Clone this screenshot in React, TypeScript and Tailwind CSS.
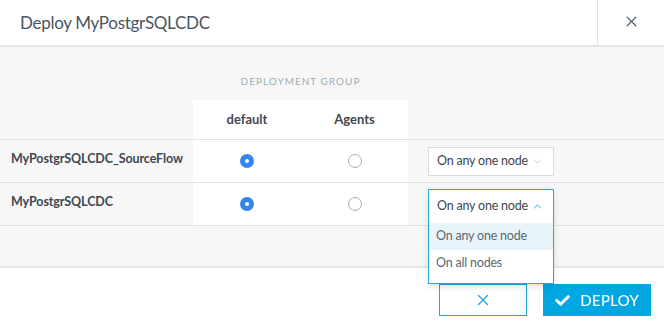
import { X, ChevronDown, ChevronUp } from "lucide-react";
import { FaCheck } from "react-icons/fa";

const flows = [
  { name: "MyPostgrSQLCDC_SourceFlow", open: false },
  { name: "MyPostgrSQLCDC", open: true },
];

function Radio({ checked }: { checked: boolean }) {
  if (checked) {
    return (
      <span className="flex h-[14px] w-[14px] items-center justify-center rounded-full bg-[#3385f0]">
        <span className="h-[4px] w-[4px] rounded-full bg-white" />
      </span>
    );
  }
  return <span className="h-[14px] w-[14px] rounded-full border border-[#a9aeb2] bg-white" />;
}

function Dropdown({ open }: { open: boolean }) {
  if (!open) {
    return (
      <div className="flex h-[29px] w-[126px] items-center whitespace-nowrap border border-[#d5dde2] bg-white pl-[8px] pr-[9px] text-[12.5px] tracking-[-0.2px] text-[#3b4650]">
        <span>On any one node</span>
        <ChevronDown size={13} strokeWidth={1.3} className="ml-auto text-[#b8c0c6]" />
      </div>
    );
  }
  return (
    <div className="relative h-[31px] w-[126px]">
      <div className="absolute left-0 top-0 z-10 w-[126px] whitespace-nowrap border border-[#2aa6de] bg-white text-[12.5px] tracking-[-0.2px] shadow-[0_3px_6px_rgba(0,0,0,0.12)]">
        <div className="flex h-[33px] items-center pl-[8px] pr-[9px] text-[#3b4650]">
          <span>On any one node</span>
          <ChevronUp size={13} strokeWidth={1.8} className="ml-auto text-[#2aa6de]" />
        </div>
        <div className="flex h-[27px] items-center bg-[#e8f4fa] pl-[7px] text-[#5d6872]">On any one node</div>
        <div className="flex h-[26px] items-center pl-[7px] text-[#5d6872]">On all nodes</div>
        <div className="h-[7px]" />
      </div>
    </div>
  );
}

export default function App() {
  return (
    <div className="flex h-[330px] w-[664px] flex-col overflow-hidden bg-white font-['Lato',sans-serif]">
      {/* Header */}
      <div className="flex h-[47px] shrink-0 border-b-2 border-[#e4e8eb]">
        <div className="flex flex-1 items-center pl-5 text-[17px] tracking-[-0.3px] text-[#4a5660]">Deploy MyPostgrSQLCDC</div>
        <div className="flex w-[67px] items-center justify-center border-l border-[#dde2e5]">
          <X size={17} strokeWidth={1.8} className="-mt-[2px] text-[#56636d]" />
        </div>
      </div>

      {/* Body */}
      <div className="h-[221px] shrink-0 border-b-2 border-[#e4e8eb] bg-[#f7f7f7]">
        <div className="flex h-[53px]">
          <div className="w-[193px]" />
          <div className="flex w-[215px] items-end justify-center pb-[11px] text-[10px] tracking-[0.1em] text-[#9fadb6]">
            DEPLOYMENT GROUP
          </div>
        </div>
        <div className="flex h-[40px] border-b border-[#dfe3e5]">
          <div className="w-[193px]" />
          <div className="flex w-[108px] items-center justify-center bg-white text-[13px] font-bold text-[#3e4851]">default</div>
          <div className="flex w-[107px] items-center justify-center bg-white text-[13px] font-bold text-[#3e4851]">Agents</div>
        </div>
        {flows.map((f) => (
          <div key={f.name} className="flex h-[43px] border-b border-[#dfe3e5]">
            <div className="flex w-[193px] items-center pb-[4px] pl-[11px] text-[12.5px] font-bold tracking-[-0.1px] text-[#3e4851]">{f.name}</div>
            <div className="flex w-[108px] items-center justify-center bg-white">
              <Radio checked />
            </div>
            <div className="flex w-[107px] items-center justify-center bg-white">
              <Radio checked={false} />
            </div>
            <div className={`flex flex-1 pl-5 ${f.open ? "items-start pt-[6px]" : "items-center"}`}>
              <Dropdown open={f.open} />
            </div>
          </div>
        ))}
      </div>

      {/* Footer */}
      <div className="flex flex-1 items-start justify-end gap-4 pr-[13px] pt-[16px]">
        <button className="flex h-[32px] w-[88px] items-center justify-center border border-[#1fa6df] bg-white text-[#1fa6df]">
          <X size={18} strokeWidth={1.6} />
        </button>
        <button className="flex h-[32px] w-[108px] items-center justify-center gap-[10px] bg-[#00a7e1] text-[15px] text-white">
          <FaCheck size={15} />
          <span className="tracking-[0.02em]">DEPLOY</span>
        </button>
      </div>
    </div>
  );
}
